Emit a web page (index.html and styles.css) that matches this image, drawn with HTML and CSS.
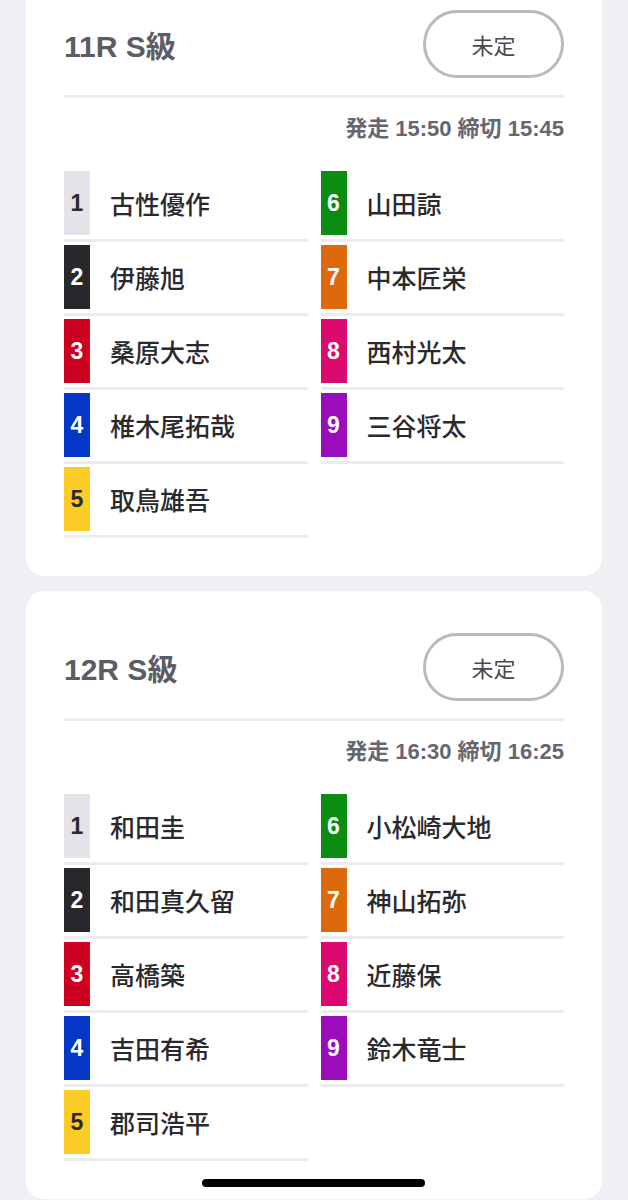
FILE: index.html
```html
<!DOCTYPE html>
<html lang="ja">
<head>
    <meta charset="UTF-8">
    <meta name="viewport" content="width=device-width, initial-scale=1.0">
    <title>出走表</title>
    <link rel="stylesheet" href="styles.css">
</head>
<body>
    <div class="page">
        <!-- 11R -->
        <div class="race-card">
            <div class="race-head">
                <h2 class="race-title">11R S級</h2>
                <button class="status-btn">未定</button>
            </div>
            <div class="divider"></div>
            <p class="race-time">発走 15:50 締切 15:45</p>
            <div class="entries">
                <div class="entry"><span class="num n1">1</span><span class="name">古性優作</span></div>
                <div class="entry"><span class="num n6">6</span><span class="name">山田諒</span></div>
                <div class="entry"><span class="num n2">2</span><span class="name">伊藤旭</span></div>
                <div class="entry"><span class="num n7">7</span><span class="name">中本匠栄</span></div>
                <div class="entry"><span class="num n3">3</span><span class="name">桑原大志</span></div>
                <div class="entry"><span class="num n8">8</span><span class="name">西村光太</span></div>
                <div class="entry"><span class="num n4">4</span><span class="name">椎木尾拓哉</span></div>
                <div class="entry"><span class="num n9">9</span><span class="name">三谷将太</span></div>
                <div class="entry"><span class="num n5">5</span><span class="name">取鳥雄吾</span></div>
            </div>
        </div>

        <!-- 12R -->
        <div class="race-card">
            <div class="race-head">
                <h2 class="race-title">12R S級</h2>
                <button class="status-btn">未定</button>
            </div>
            <div class="divider"></div>
            <p class="race-time">発走 16:30 締切 16:25</p>
            <div class="entries">
                <div class="entry"><span class="num n1">1</span><span class="name">和田圭</span></div>
                <div class="entry"><span class="num n6">6</span><span class="name">小松崎大地</span></div>
                <div class="entry"><span class="num n2">2</span><span class="name">和田真久留</span></div>
                <div class="entry"><span class="num n7">7</span><span class="name">神山拓弥</span></div>
                <div class="entry"><span class="num n3">3</span><span class="name">高橋築</span></div>
                <div class="entry"><span class="num n8">8</span><span class="name">近藤保</span></div>
                <div class="entry"><span class="num n4">4</span><span class="name">吉田有希</span></div>
                <div class="entry"><span class="num n9">9</span><span class="name">鈴木竜士</span></div>
                <div class="entry"><span class="num n5">5</span><span class="name">郡司浩平</span></div>
            </div>
        </div>
    </div>

    <div class="home-indicator"></div>
</body>
</html>
```

FILE: styles.css
```css
body {
    margin: 0;
    background-color: #efeff4;
    font-family: "Liberation Sans", "Noto Sans CJK JP", sans-serif;
    color: #2a2a2e;
}

.page {
    display: flex;
    flex-direction: column;
    gap: 15px;
    padding: 0 26px 3px;
}

.race-card {
    background-color: #fff;
    border-radius: 18px;
    padding: 42px 38px 38px;
}

.race-card:first-child {
    margin-top: -32px;
    border-top-left-radius: 0;
    border-top-right-radius: 0;
}

.race-head {
    display: flex;
    justify-content: space-between;
    align-items: center;
    height: 68px;
}

.race-title {
    margin: 0;
    font-size: 30px;
    font-weight: bold;
    color: #5c5c64;
}

.status-btn {
    width: 141px;
    height: 68px;
    border: 3px solid #b9b9be;
    border-radius: 34px;
    background-color: #fff;
    font-family: "Noto Sans CJK JP", sans-serif;
    font-size: 22px;
    color: #48484e;
    padding: 0;
}

.divider {
    height: 3px;
    background-color: #ececf0;
    margin-top: 17px;
}

.race-time {
    margin: 18px 0 0;
    text-align: right;
    font-size: 22px;
    line-height: 26px;
    font-weight: bold;
    color: #66666e;
}

.entries {
    display: grid;
    grid-template-columns: 1fr 1fr;
    column-gap: 13px;
    row-gap: 3px;
    margin-top: 29px;
}

.entry {
    display: flex;
    align-items: center;
    gap: 20px;
    padding-bottom: 4px;
    border-bottom: 3px solid #ececf0;
}

.num {
    width: 26px;
    height: 64px;
    display: flex;
    justify-content: center;
    align-items: center;
    font-size: 23px;
    font-weight: bold;
    color: #fff;
}

.name {
    font-family: "Noto Sans CJK JP", sans-serif;
    font-size: 25px;
    font-weight: 500;
    color: #2a2a2e;
}

.n1 { background-color: #e3e3e8; color: #2a2a2e; }
.n2 { background-color: #28282c; }
.n3 { background-color: #cc0020; }
.n4 { background-color: #0436c8; }
.n5 { background-color: #fbcb28; color: #2a2a2e; }
.n6 { background-color: #0b8c12; }
.n7 { background-color: #dc6a0c; }
.n8 { background-color: #dc0a6e; }
.n9 { background-color: #9a0cbc; }

.home-indicator {
    position: fixed;
    left: 202px;
    bottom: 13px;
    width: 223px;
    height: 8px;
    border-radius: 4px;
    background-color: #000;
}
```
